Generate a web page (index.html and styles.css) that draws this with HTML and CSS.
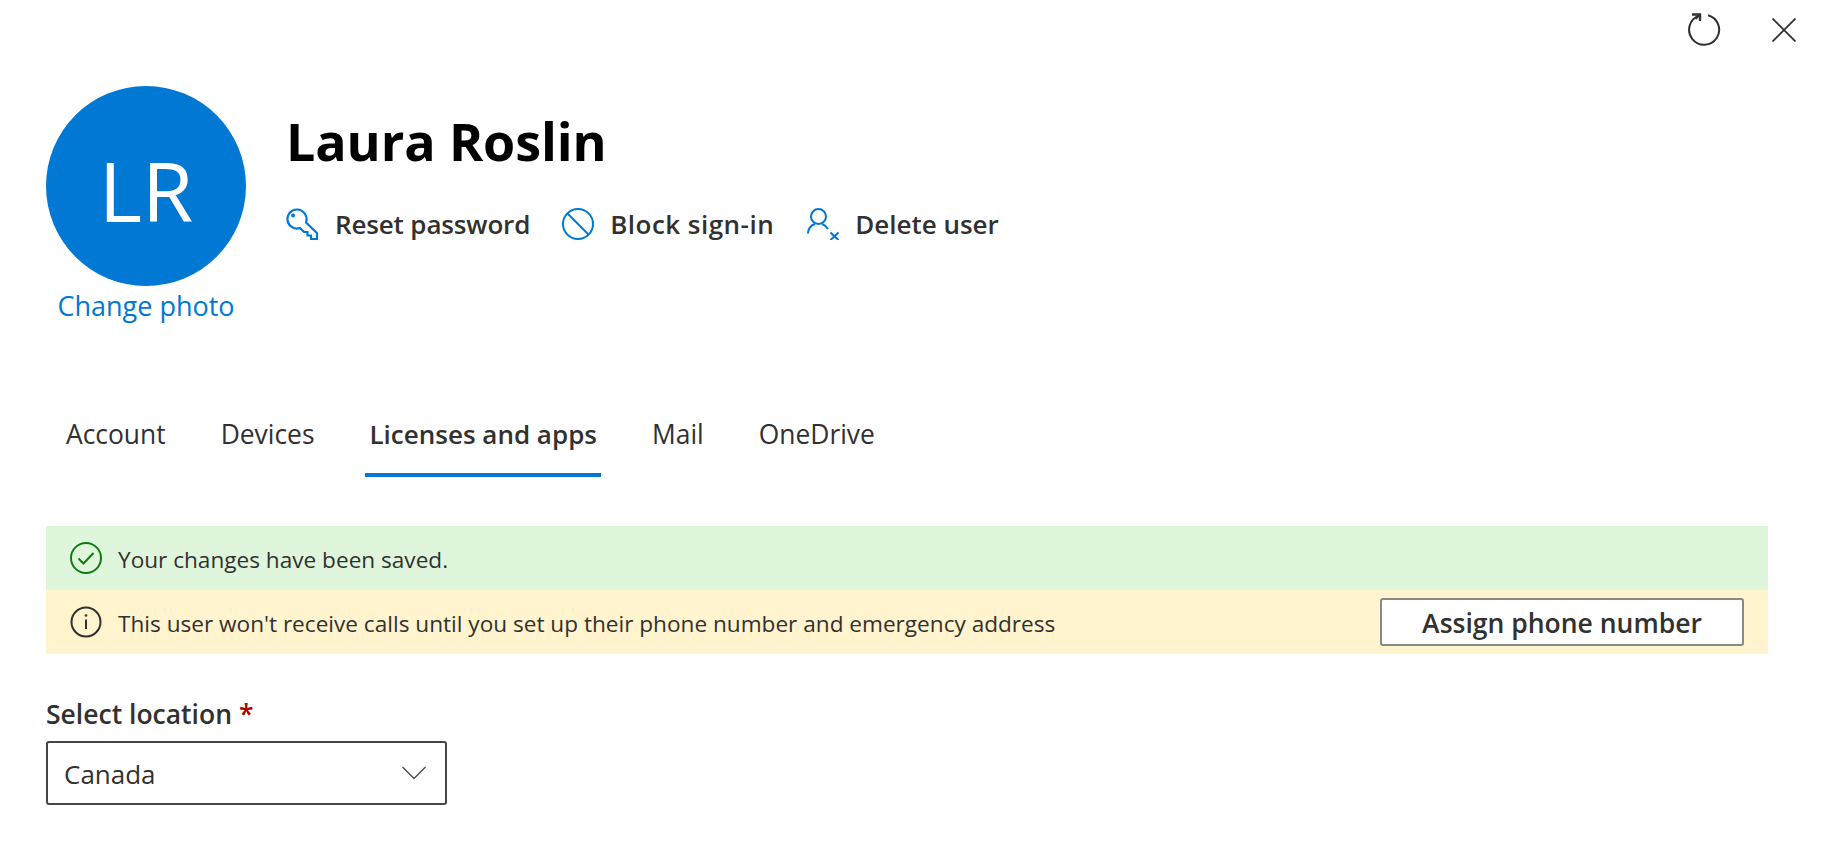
FILE: index.html
```html
<!DOCTYPE html>
<html lang="en">
<head>
<meta charset="utf-8">
<title>Laura Roslin</title>
<link rel="stylesheet" href="styles.css">
</head>
<body>
<div class="page">
  <div class="topbar">
    <svg class="ico-refresh" width="34" height="34" viewBox="0 0 34 34" fill="none" stroke="#323130" stroke-width="2"><path d="M20 2.2A15 15 0 1 1 11 2.6"/><path d="M4 1.5H12V8" stroke-width="2.4"/><path d="M12 1.5L7.5 6" stroke-width="2"/></svg>
    <svg class="ico-close" width="24" height="24" viewBox="0 0 24 24" fill="none" stroke="#323130" stroke-width="1.8"><path d="M.5.5L23.500 23.500M23.500.5L.5 23.500"/></svg>
  </div>
  <header class="head">
    <div class="avatar-col">
      <div class="avatar">LR</div>
      <a class="change">Change photo</a>
    </div>
    <div class="info">
      <h1 class="name">Laura Roslin</h1>
      <div class="actions">
        <div class="action reset">
          <svg width="32" height="32" viewBox="0 0 32 32" fill="none" stroke="#0078d4" stroke-width="2.2"><path d="M11 1.500A9.800 9.800 0 0 1 20 14.500L31 25V31H25V27.500H21.500V24H18L14 20A9.500 9.500 0 1 1 11 1.500Z"/><circle cx="7" cy="7.500" r="2" fill="#0078d4" stroke="none"/></svg>
          <span>Reset password</span>
        </div>
        <div class="action block">
          <svg width="32" height="32" viewBox="0 0 32 32" fill="none" stroke="#0078d4" stroke-width="2"><circle cx="16" cy="16" r="15"/><path d="M5.500 5.500L26.500 26.500"/></svg>
          <span>Block sign-in</span>
        </div>
        <div class="action delete">
          <svg width="34" height="32" viewBox="0 0 34 32" fill="none" stroke="#0078d4" stroke-width="2"><circle cx="12.500" cy="8.500" r="7.500"/><path d="M2 25.500A10.500 10.500 0 0 1 9 16M16 16A11 11 0 0 1 22 21"/><path d="M24.500 24.500L32.500 32M32.500 24.500L24.500 32"/></svg>
          <span>Delete user</span>
        </div>
      </div>
    </div>
  </header>
  <nav class="tabs">
    <div class="tab">Account</div>
    <div class="tab">Devices</div>
    <div class="tab active">Licenses and apps</div>
    <div class="tab">Mail</div>
    <div class="tab">OneDrive</div>
  </nav>
  <section class="banners">
    <div class="banner ok">
      <svg width="34" height="34" viewBox="0 0 34 34" fill="none" stroke="#107c10" stroke-width="2"><circle cx="17" cy="17" r="15"/><path d="M9.500 17.500L14.500 22.500L24.500 12"/></svg>
      <span class="msg">Your changes have been saved.</span>
    </div>
    <div class="banner warn">
      <svg width="34" height="34" viewBox="0 0 34 34" fill="none" stroke="#323130" stroke-width="2"><circle cx="17" cy="17" r="14.500"/><path d="M17 14.500V24"/><circle cx="17" cy="10.500" r="1.300" fill="#323130" stroke="none"/></svg>
      <span class="msg">This user won't receive calls until you set up their phone number and emergency address</span>
      <button class="assign">Assign phone number</button>
    </div>
  </section>
  <section class="field">
    <div class="label">Select location <span class="req">*</span></div>
    <div class="select">
      <span class="value">Canada</span>
      <svg width="24" height="14" viewBox="0 0 24 14" fill="none" stroke="#484644" stroke-width="1.300"><path d="M.5 1L12 12.500L23.500 1"/></svg>
    </div>
  </section>
</div>
</body>
</html>
```
FILE: styles.css
```css
* { box-sizing: border-box; }
html, body { margin: 0; padding: 0; background: #fff; }
body { font-family: "Open Sans", "Noto Sans", sans-serif; color: #323130; }
.page { width: 1825px; height: 847px; overflow: hidden; }
.topbar { height: 86px; display: flex; justify-content: flex-end; align-items: flex-start; padding: 13px 29px 0 0; gap: 50px; }
.ico-close { margin-top: 5px; }
.head { display: flex; padding-left: 46px; height: 326px; }
.avatar-col { width: 200px; display: flex; flex-direction: column; align-items: center; }
.avatar { width: 200px; height: 200px; border-radius: 50%; background: #0078d4; color: #fff; font-size: 83px; font-weight: 500; line-height: 208px; text-align: center; }
.change { color: #0078d4; font-size: 27px; line-height: 40px; white-space: nowrap; }
.info { margin-left: 40px; }
.name { margin: 24px 0 0; font-size: 52px; line-height: 62px; font-weight: 700; color: #000; letter-spacing: -.1px; }
.actions { display: flex; gap: 32px; margin-top: 35px; }
.action { display: flex; align-items: center; gap: 17px; font-size: 26px; font-weight: 600; line-height: 34px; white-space: nowrap; }
.reset { letter-spacing: -.15px; }
.block { gap: 16px; letter-spacing: .47px; }
.delete { gap: 15px; }
.tabs { display: flex; padding-left: 62px; gap: 47px; height: 65px; }
.tab { font-size: 26.4px; line-height: 44px; padding: 0 4px; height: 65px; white-space: nowrap; }
.tab.active { font-size: 26px; font-weight: 600; border-bottom: 4px solid #0078d4; }
.banners { margin: 49px 57px 0 46px; }
.banner { height: 64px; display: flex; align-items: center; padding-left: 23px; font-size: 22.6px; }
.banner svg { flex: none; margin-right: 15px; }
.ok { background: #dff6dd; }
.warn { background: #fff4ce; padding-right: 24px; }
.msg { flex: 1; white-space: nowrap; padding-top: 2px; }
.assign { width: 364px; height: 48px; background: #fff; border: 2px solid #8a8886; border-radius: 3px; font: 600 26.5px "Open Sans", sans-serif; color: #323130; padding: 2px 0 0; }
.field { margin: 37px 0 0 46px; }
.label { font-size: 26.5px; font-weight: 600; line-height: 47px; padding-bottom: 3px; }
.req { color: #a80000; }
.select { width: 401px; height: 64px; border: 2px solid #484644; border-radius: 3px; display: flex; align-items: center; justify-content: space-between; padding: 0 19px 0 16px; font-size: 26px; }
.value { padding-top: 2px; }
```
